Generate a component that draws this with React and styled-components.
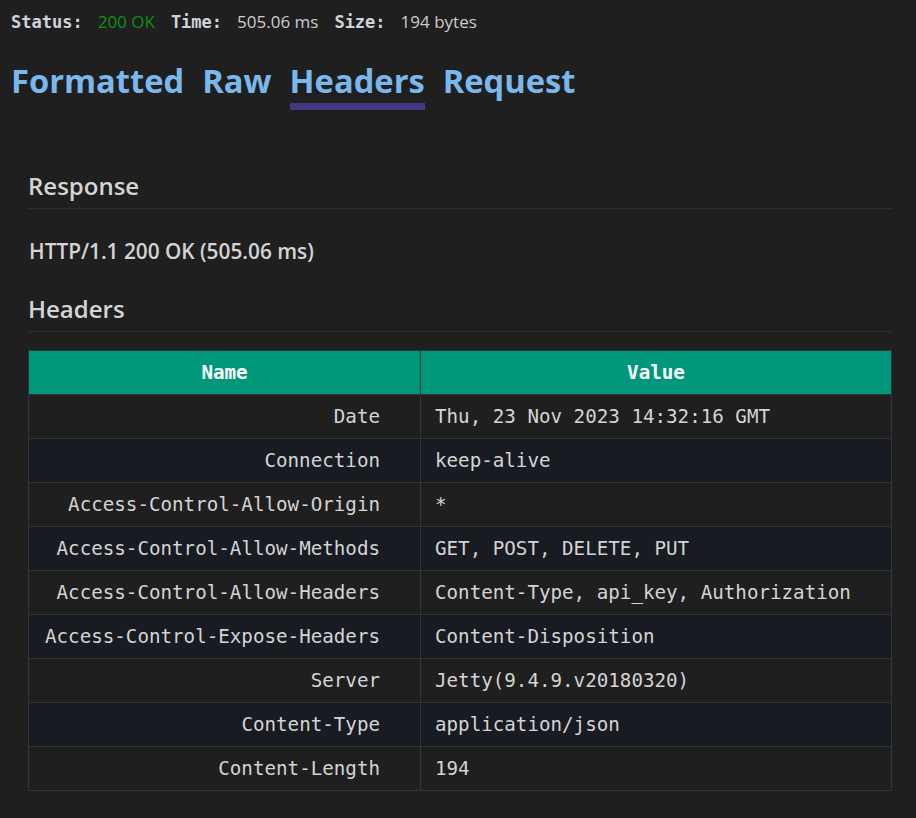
import styled, { createGlobalStyle } from 'styled-components';

const GlobalStyle = createGlobalStyle`
  html, body {
    margin: 0;
    padding: 0;
    background: #1f1f1f;
  }
  body {
    font-family: "Open Sans", "Noto Sans", sans-serif;
    color: #cccccc;
  }
`;

const Page = styled.div`
  width: 916px;
  min-height: 818px;
  box-sizing: border-box;
  padding: 8px 24px 0 11px;
`;

const StatusBar = styled.div`
  display: flex;
  align-items: baseline;
  height: 28px;
  font-size: 17px;
  line-height: 28px;
`;

const StatusLabel = styled.span`
  font-family: "DejaVu Sans Mono", monospace;
  font-weight: bold;
  font-size: 17px;
  color: #cfd3da;
  margin-right: 15px;
`;

const StatusValue = styled.span`
  color: ${p => p.ok ? '#118f11' : '#cccccc'};
  margin-right: 16px;
`;

const Tabs = styled.nav`
  display: flex;
  gap: 18px;
  margin-top: 24px;
`;

const Tab = styled.div`
  font-size: 32.7px;
  font-weight: 700;
  color: #7ab7ea;
  line-height: 42px;
  padding-bottom: 1px;
  border-bottom: 7px solid ${p => p.active ? '#423884' : 'transparent'};
`;

const Panel = styled.section`
  padding: 60px 0 0 17px;
`;

const SectionTitle = styled.h2`
  margin: 0;
  font-size: 24px;
  font-weight: 600;
  color: #d4d4d4;
  line-height: 32px;
  padding-bottom: 6px;
  border-bottom: 1px solid #2a2e35;
`;

const StatusLine = styled.p`
  margin: 27px 0 27px 1px;
  font-size: 20.8px;
  font-weight: 600;
  color: #d4d4d4;
  line-height: 30px;
`;

const Table = styled.table`
  margin-top: 18px;
  width: 864px;
  border-collapse: collapse;
  font-family: "DejaVu Sans Mono", monospace;
  font-size: 19.2px;
  color: #d4d4d4;
`;

const HeadCell = styled.th`
  background: #00977a;
  color: #ffffff;
  font-weight: bold;
  height: 43px;
  padding: 0;
  text-align: center;
  border: 1px solid #30353d;
`;

const Row = styled.tr`
  background: ${p => p.alt ? '#181b22' : '#1f1f1f'};
`;

const NameCell = styled.td`
  width: 351px;
  height: 43px;
  padding: 0 40px 0 0;
  text-align: right;
  border: 1px solid #30353d;
  white-space: nowrap;
`;

const ValueCell = styled.td`
  height: 43px;
  padding: 0 0 0 14px;
  text-align: left;
  border: 1px solid #30353d;
  white-space: nowrap;
`;

const headers = [
  ['Date', 'Thu, 23 Nov 2023 14:32:16 GMT'],
  ['Connection', 'keep-alive'],
  ['Access-Control-Allow-Origin', '*'],
  ['Access-Control-Allow-Methods', 'GET, POST, DELETE, PUT'],
  ['Access-Control-Allow-Headers', 'Content-Type, api_key, Authorization'],
  ['Access-Control-Expose-Headers', 'Content-Disposition'],
  ['Server', 'Jetty(9.4.9.v20180320)'],
  ['Content-Type', 'application/json'],
  ['Content-Length', '194'],
];

export default function App() {
  return (
    <Page>
      <GlobalStyle />
      <StatusBar>
        <StatusLabel>Status:</StatusLabel>
        <StatusValue ok>200 OK</StatusValue>
        <StatusLabel>Time:</StatusLabel>
        <StatusValue>505.06 ms</StatusValue>
        <StatusLabel>Size:</StatusLabel>
        <StatusValue>194 bytes</StatusValue>
      </StatusBar>

      <Tabs>
        <Tab>Formatted</Tab>
        <Tab>Raw</Tab>
        <Tab active>Headers</Tab>
        <Tab>Request</Tab>
      </Tabs>

      <Panel>
        <SectionTitle>Response</SectionTitle>
        <StatusLine>HTTP/1.1 200 OK (505.06 ms)</StatusLine>
        <SectionTitle>Headers</SectionTitle>
        <Table>
          <thead>
            <tr>
              <HeadCell>Name</HeadCell>
              <HeadCell>Value</HeadCell>
            </tr>
          </thead>
          <tbody>
            {headers.map(([name, value], i) => (
              <Row key={name} alt={i % 2 === 1}>
                <NameCell>{name}</NameCell>
                <ValueCell>{value}</ValueCell>
              </Row>
            ))}
          </tbody>
        </Table>
      </Panel>
    </Page>
  );
}
